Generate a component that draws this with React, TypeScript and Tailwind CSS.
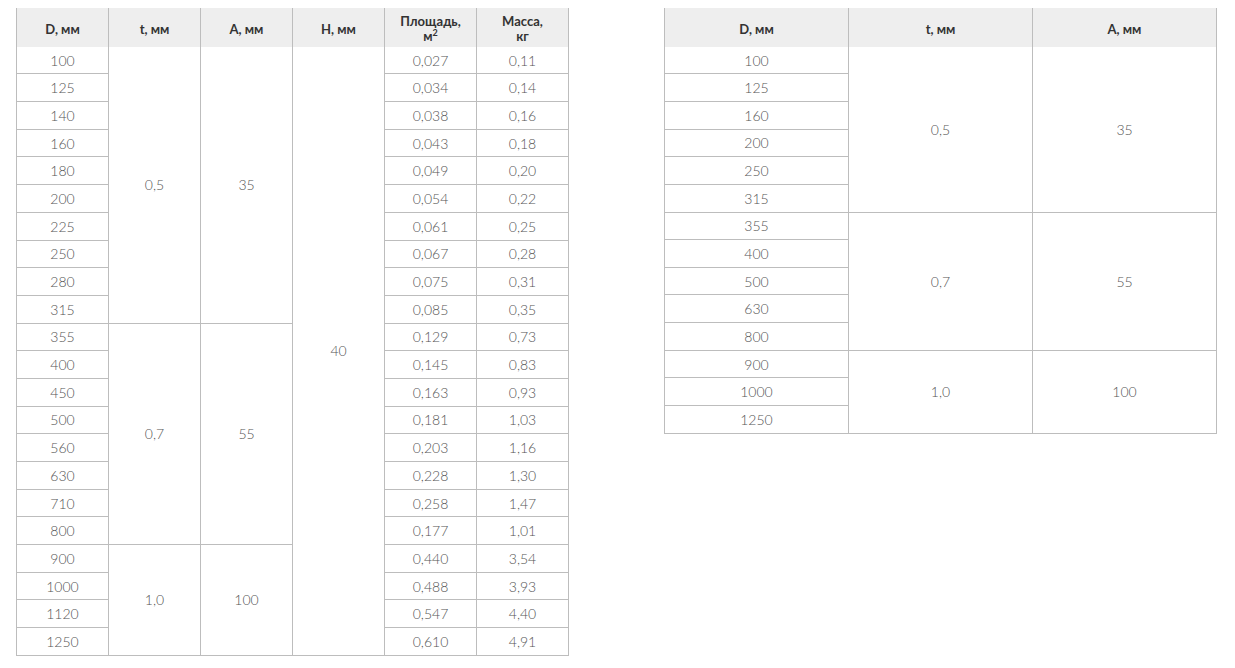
import React from "react";

const H = "flex items-center justify-center bg-[#eeeeee] border-r border-[#bdbdbd] pt-[4px] text-[13px] leading-[15px] font-bold text-[#333333] text-center";
const C = "flex items-center justify-center border-r border-b border-[#bdbdbd] bg-white text-[14px] font-light text-[#555555]";

const leftRows: [string, string, string][] = [
  ["100", "0,027", "0,11"],
  ["125", "0,034", "0,14"],
  ["140", "0,038", "0,16"],
  ["160", "0,043", "0,18"],
  ["180", "0,049", "0,20"],
  ["200", "0,054", "0,22"],
  ["225", "0,061", "0,25"],
  ["250", "0,067", "0,28"],
  ["280", "0,075", "0,31"],
  ["315", "0,085", "0,35"],
  ["355", "0,129", "0,73"],
  ["400", "0,145", "0,83"],
  ["450", "0,163", "0,93"],
  ["500", "0,181", "1,03"],
  ["560", "0,203", "1,16"],
  ["630", "0,228", "1,30"],
  ["710", "0,258", "1,47"],
  ["800", "0,177", "1,01"],
  ["900", "0,440", "3,54"],
  ["1000", "0,488", "3,93"],
  ["1120", "0,547", "4,40"],
  ["1250", "0,610", "4,91"],
];

const rightD = ["100", "125", "160", "200", "250", "315", "355", "400", "500", "630", "800", "900", "1000", "1250"];

function LeftTable() {
  const cells: React.ReactNode[] = [];
  leftRows.forEach((r, i) => {
    cells.push(<div key={`d${i}`} className={C}>{r[0]}</div>);
    if (i === 0) {
      cells.push(<div key="t1" className={`${C} row-span-10`}>0,5</div>);
      cells.push(<div key="a1" className={`${C} row-span-10`}>35</div>);
      cells.push(<div key="h" className={`${C} row-span-22`}>40</div>);
    }
    if (i === 10) {
      cells.push(<div key="t2" className={`${C} row-span-8`}>0,7</div>);
      cells.push(<div key="a2" className={`${C} row-span-8`}>55</div>);
    }
    if (i === 18) {
      cells.push(<div key="t3" className={`${C} row-span-4`}>1,0</div>);
      cells.push(<div key="a3" className={`${C} row-span-4`}>100</div>);
    }
    cells.push(<div key={`s${i}`} className={C}>{r[1]}</div>);
    cells.push(<div key={`m${i}`} className={C}>{r[2]}</div>);
  });
  return (
    <div className="grid grid-cols-[repeat(6,92px)] grid-rows-[38.7px_repeat(22,27.7px)] border-l border-[#bdbdbd]">
      <div className={H}>D, мм</div>
      <div className={H}>t, мм</div>
      <div className={H}>A, мм</div>
      <div className={H}>H, мм</div>
      <div className={H}>
        <span>
          Площадь,
          <br />
          м<span className="relative -top-[5px] text-[9px] leading-none">2</span>
        </span>
      </div>
      <div className={H}>
        <span>
          Масса,
          <br />
          кг
        </span>
      </div>
      {cells}
    </div>
  );
}

function RightTable() {
  const cells: React.ReactNode[] = [];
  rightD.forEach((d, i) => {
    cells.push(<div key={`d${i}`} className={C}>{d}</div>);
    if (i === 0) {
      cells.push(<div key="t1" className={`${C} row-span-6`}>0,5</div>);
      cells.push(<div key="a1" className={`${C} row-span-6`}>35</div>);
    }
    if (i === 6) {
      cells.push(<div key="t2" className={`${C} row-span-5`}>0,7</div>);
      cells.push(<div key="a2" className={`${C} row-span-5`}>55</div>);
    }
    if (i === 11) {
      cells.push(<div key="t3" className={`${C} row-span-3`}>1,0</div>);
      cells.push(<div key="a3" className={`${C} row-span-3`}>100</div>);
    }
  });
  return (
    <div className="grid grid-cols-[repeat(3,184px)] grid-rows-[38.7px_repeat(14,27.65px)] border-l border-[#bdbdbd]">
      <div className={H}>D, мм</div>
      <div className={H}>t, мм</div>
      <div className={H}>A, мм</div>
      {cells}
    </div>
  );
}

export default function App() {
  return (
    <div
      className="w-[1235px] h-[668px] bg-white flex items-start gap-[95px] pl-[16px] pt-[8px]"
      style={{ fontFamily: "Lato, 'Noto Sans', sans-serif" }}
    >
      <LeftTable />
      <RightTable />
    </div>
  );
}
